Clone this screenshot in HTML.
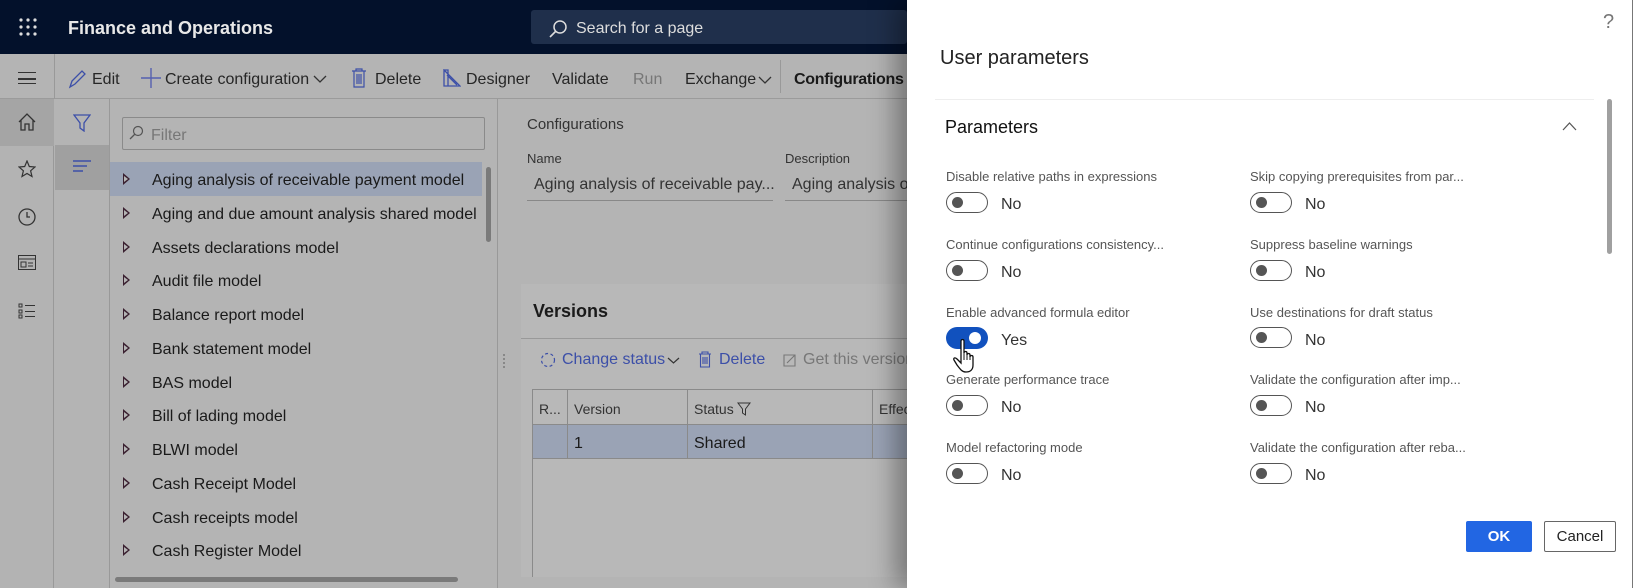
<!DOCTYPE html>
<html><head><meta charset="utf-8"><style>
*{box-sizing:border-box;margin:0;padding:0}
body{width:1638px;height:588px;overflow:hidden;position:relative;background:#b4b4b4;font-family:"Liberation Sans",sans-serif;color:#1f1f1f}
.a{position:absolute;white-space:nowrap}
.top{left:0;top:0;width:907px;height:54px;background:#03112b}
.tb{left:0;top:54px;width:907px;height:45px;background:#b4b4b4;border-bottom:1px solid #9b9b9b}
.nav{left:0;top:99px;width:54px;height:489px;background:#b3b3b3;border-right:1px solid #999}
.col2{left:54px;top:99px;width:56px;height:489px;border-right:1px solid #999}
.row{left:122px;font-size:16px;color:#1a1a1a}
.tri{left:123px;width:0;height:0;border-left:7px solid #3a2030;border-top:6px solid transparent;border-bottom:6px solid transparent}
.tri:after{content:"";position:absolute;left:-6px;top:-3px;border-left:4px solid #b4b4b4;border-top:3px solid transparent;border-bottom:3px solid transparent}
.tbt{top:71px;font-size:16px;color:#262626}
.dlg{left:907px;top:0;width:731px;height:588px;background:#fff;box-shadow:-12px 0 24px rgba(0,0,0,.35)}
.lbl{font-size:13px;color:#555}
.tg{width:42px;height:21px;border:1px solid #555;border-radius:11px}
.tg:after{content:"";position:absolute;left:5px;top:4px;width:11px;height:11px;border-radius:50%;background:#555}
.no{font-size:16px;color:#333}
</style></head><body>
<div class="a top"></div>
<div class="a" style="left:19px;top:18px;width:18px;height:18px">
<svg width="18" height="18"><g fill="#ddd"><circle cx="2" cy="2" r="1.6"/><circle cx="9" cy="2" r="1.6"/><circle cx="16" cy="2" r="1.6"/><circle cx="2" cy="9" r="1.6"/><circle cx="9" cy="9" r="1.6"/><circle cx="16" cy="9" r="1.6"/><circle cx="2" cy="16" r="1.6"/><circle cx="9" cy="16" r="1.6"/><circle cx="16" cy="16" r="1.6"/></g></svg></div>
<div class="a" style="left:68px;top:18px;font-size:18px;font-weight:bold;color:#e8e8e8">Finance and Operations</div>
<div class="a" style="left:531px;top:10px;width:376px;height:34px;background:#1f2f4b;border-radius:3px"></div>
<svg class="a" style="left:548px;top:19px" width="20" height="20"><circle cx="12" cy="8" r="6" fill="none" stroke="#ddd" stroke-width="1.5"/><line x1="8" y1="12" x2="2" y2="18" stroke="#ddd" stroke-width="1.6"/></svg>
<div class="a" style="left:576px;top:20px;font-size:16px;color:#ddd">Search for a page</div>
<div class="a tb"></div>
<div class="a" style="left:18px;top:72px;width:18px;height:12px;border-top:1.5px solid #333;border-bottom:1.5px solid #333"></div>
<div class="a" style="left:18px;top:78px;width:18px;height:1.5px;background:#333"></div>
<div class="a" style="left:54px;top:54px;width:1px;height:45px;background:#999"></div>
<svg class="a" style="left:68px;top:69px" width="18" height="20"><path d="M2 18 L4 12 L14 2 L17 5 L7 15 Z" fill="none" stroke="#3c4fa8" stroke-width="1.3"/></svg>
<div class="a tbt" style="left:92px">Edit</div>
<svg class="a" style="left:141px;top:68px" width="20" height="20"><path d="M10 0V20M0 10H20" stroke="#5560b0" stroke-width="1.4"/></svg>
<div class="a tbt" style="left:165px">Create configuration</div>
<svg class="a" style="left:313px;top:75px" width="14" height="9"><path d="M1 1L7 7L13 1" fill="none" stroke="#333" stroke-width="1.3"/></svg>
<svg class="a" style="left:351px;top:68px" width="16" height="20"><path d="M1 3H15M5 3V1H11V3M3 3V19H13V3M6 6V16M8 6V16M10 6V16" fill="none" stroke="#3c4fa8" stroke-width="1.2"/></svg>
<div class="a tbt" style="left:375px">Delete</div>
<svg class="a" style="left:443px;top:69px" width="18" height="18"><path d="M1 1V17H17Z M1 1H5V17 M4 6L14 16" fill="none" stroke="#3c4fa8" stroke-width="1.3"/></svg>
<div class="a tbt" style="left:466px">Designer</div>
<div class="a tbt" style="left:552px">Validate</div>
<div class="a tbt" style="left:633px;color:#777">Run</div>
<div class="a tbt" style="left:685px">Exchange</div>
<svg class="a" style="left:758px;top:76px" width="14" height="9"><path d="M1 1L7 7L13 1" fill="none" stroke="#333" stroke-width="1.3"/></svg>
<div class="a" style="left:780px;top:60px;width:1px;height:33px;background:#999"></div>
<div class="a tbt" style="left:794px;font-weight:bold;color:#1a1a1a;letter-spacing:-0.3px">Configurations</div>
<div class="a nav"></div>
<div class="a" style="left:0;top:99px;width:54px;height:47px;background:#a5a5a5"></div>
<svg class="a" style="left:18px;top:113px" width="18" height="18"><path d="M1 9L9 1L17 9M3 7V17H7V11H11V17H15V7" fill="none" stroke="#333" stroke-width="1.3"/></svg>
<svg class="a" style="left:18px;top:160px" width="18" height="18"><path d="M9 1L11.3 6.5L17 7L12.6 10.8L14 16.5L9 13.5L4 16.5L5.4 10.8L1 7L6.7 6.5Z" fill="none" stroke="#333" stroke-width="1.2"/></svg>
<svg class="a" style="left:18px;top:208px" width="18" height="18"><circle cx="9" cy="9" r="8" fill="none" stroke="#333" stroke-width="1.3"/><path d="M9 4V9H12" fill="none" stroke="#333" stroke-width="1.3"/></svg>
<svg class="a" style="left:18px;top:255px" width="18" height="16"><rect x="0.5" y="0.5" width="17" height="14" fill="none" stroke="#333"/><path d="M1 4H17M3 7H8V12H3Z M10 8H15M10 11H15" fill="none" stroke="#333"/></svg>
<svg class="a" style="left:18px;top:303px" width="18" height="16"><path d="M1 1H4V4H1Z M1 7H4V10H1Z M1 12H4V15H1Z M7 2.5H17 M7 8.5H17 M7 13.5H17" fill="none" stroke="#333"/></svg>
<div class="a col2"></div>
<div class="a" style="left:55px;top:145px;width:54px;height:45px;background:#a0a0a0"></div>
<svg class="a" style="left:73px;top:114px" width="18" height="18"><path d="M1 1H17L11 9V17L7 14V9Z" fill="none" stroke="#3c4fa8" stroke-width="1.3"/></svg>
<svg class="a" style="left:73px;top:160px" width="18" height="14"><path d="M0 1H18M0 6H14M0 11H10" stroke="#3c4fa8" stroke-width="1.4"/></svg>
<div class="a" style="left:122px;top:117px;width:363px;height:33px;border:1px solid #8a8a8a;border-radius:2px"></div>
<svg class="a" style="left:128px;top:125px" width="16" height="16"><circle cx="10" cy="6" r="4.5" fill="none" stroke="#555" stroke-width="1.2"/><line x1="7" y1="9" x2="2" y2="14" stroke="#555" stroke-width="1.3"/></svg>
<div class="a" style="left:151px;top:127px;font-size:16px;color:#777">Filter</div>
<div class="a" style="left:110px;top:162px;width:372px;height:34px;background:#9aa3b5"></div>
<div class="a" style="left:486px;top:167px;width:5px;height:75px;background:#7a7a7a;border-radius:3px"></div>
<div class="a" style="left:115px;top:577px;width:343px;height:5px;background:#7a7a7a;border-radius:3px"></div>
<div class="a tri" style="top:173px"></div><div class="a row" style="left:152px;top:172px">Aging analysis of receivable payment model</div>
<div class="a tri" style="top:207px"></div><div class="a row" style="left:152px;top:206px">Aging and due amount analysis shared model</div>
<div class="a tri" style="top:241px"></div><div class="a row" style="left:152px;top:240px">Assets declarations model</div>
<div class="a tri" style="top:274px"></div><div class="a row" style="left:152px;top:273px">Audit file model</div>
<div class="a tri" style="top:308px"></div><div class="a row" style="left:152px;top:307px">Balance report model</div>
<div class="a tri" style="top:342px"></div><div class="a row" style="left:152px;top:341px">Bank statement model</div>
<div class="a tri" style="top:376px"></div><div class="a row" style="left:152px;top:375px">BAS model</div>
<div class="a tri" style="top:409px"></div><div class="a row" style="left:152px;top:408px">Bill of lading model</div>
<div class="a tri" style="top:443px"></div><div class="a row" style="left:152px;top:442px">BLWI model</div>
<div class="a tri" style="top:477px"></div><div class="a row" style="left:152px;top:476px">Cash Receipt Model</div>
<div class="a tri" style="top:511px"></div><div class="a row" style="left:152px;top:510px">Cash receipts model</div>
<div class="a tri" style="top:544px"></div><div class="a row" style="left:152px;top:543px">Cash Register Model</div>
<div class="a" style="left:497px;top:99px;width:1px;height:489px;background:#999"></div>
<div class="a" style="left:503px;top:354px;width:2px;height:14px;border-left:2px dotted #888"></div>
<div class="a" style="left:527px;top:116px;font-size:15px;color:#333">Configurations</div>
<div class="a" style="left:527px;top:151px;font-size:13px;color:#333">Name</div>
<div class="a" style="left:785px;top:151px;font-size:13px;color:#333">Description</div>
<div class="a" style="left:534px;top:176px;font-size:16px;color:#333">Aging analysis of receivable pay...</div>
<div class="a" style="left:792px;top:176px;font-size:16px;color:#333">Aging analysis of</div>
<div class="a" style="left:527px;top:200px;width:246px;height:1px;background:#888"></div>
<div class="a" style="left:785px;top:200px;width:122px;height:1px;background:#888"></div>
<div class="a" style="left:521px;top:284px;width:386px;height:293px;background:#b8b8b8"></div>
<div class="a" style="left:533px;top:301px;font-size:18px;font-weight:bold;color:#1a1a1a">Versions</div>
<div class="a" style="left:521px;top:338px;width:386px;height:1px;background:#999"></div>
<svg class="a" style="left:540px;top:352px" width="16" height="16"><circle cx="8" cy="8" r="6.5" fill="none" stroke="#3c4fa8" stroke-width="1.2" stroke-dasharray="3 2.5"/></svg>
<div class="a" style="left:562px;top:351px;font-size:16px;color:#3c4fa8">Change status</div>
<svg class="a" style="left:667px;top:357px" width="13" height="8"><path d="M1 1L6.5 6L12 1" fill="none" stroke="#333" stroke-width="1.2"/></svg>
<svg class="a" style="left:698px;top:351px" width="14" height="17"><path d="M1 3H13M4 3V1H10V3M2.5 3V16H11.5V3M5 6V13M7 6V13M9 6V13" fill="none" stroke="#3c4fa8" stroke-width="1.1"/></svg>
<div class="a" style="left:719px;top:351px;font-size:16px;color:#3c4fa8">Delete</div>
<svg class="a" style="left:783px;top:353px" width="14" height="14"><path d="M1 2H12V13H1Z M4 10L12 2" fill="none" stroke="#777" stroke-width="1.1"/></svg>
<div class="a" style="left:803px;top:351px;font-size:16px;color:#777">Get this version</div>
<div class="a" style="left:532px;top:389px;width:380px;height:188px;border:1px solid #8a8a8a;border-bottom:none"></div>
<div class="a" style="left:533px;top:424px;width:374px;height:35px;background:#9aa3b5;border-top:1px solid #8a8a8a;border-bottom:1px solid #8a8a8a"></div>
<div class="a" style="left:567px;top:389px;width:1px;height:70px;background:#8a8a8a"></div>
<div class="a" style="left:687px;top:389px;width:1px;height:70px;background:#8a8a8a"></div>
<div class="a" style="left:872px;top:389px;width:1px;height:70px;background:#8a8a8a"></div>
<div class="a" style="left:539px;top:401px;font-size:14px;color:#333">R...</div>
<div class="a" style="left:574px;top:401px;font-size:14px;color:#333">Version</div>
<div class="a" style="left:694px;top:401px;font-size:14px;color:#333">Status</div>
<svg class="a" style="left:737px;top:402px" width="14" height="14"><path d="M1 1H13L8.5 7V13L5.5 11V7Z" fill="none" stroke="#333"/></svg>
<div class="a" style="left:879px;top:401px;font-size:14px;color:#333">Effec</div>
<div class="a" style="left:574px;top:435px;font-size:16px;color:#1a1a1a">1</div>
<div class="a" style="left:694px;top:435px;font-size:16px;color:#1a1a1a">Shared</div>

<div class="a dlg"></div>
<div class="a" style="left:1603px;top:11px;font-size:20px;color:#777">?</div>
<div class="a" style="left:1632px;top:0;width:1px;height:588px;background:#777"></div>
<div class="a" style="left:940px;top:47px;font-size:20px;color:#222">User parameters</div>
<div class="a" style="left:935px;top:99px;width:659px;height:1px;background:#eee"></div>
<div class="a" style="left:1607px;top:99px;width:5px;height:155px;background:#a0a0a0;border-radius:3px"></div>
<div class="a" style="left:945px;top:117px;font-size:18px;color:#111">Parameters</div>
<svg class="a" style="left:1562px;top:122px" width="15" height="9"><path d="M1 8L7.5 1L14 8" fill="none" stroke="#555" stroke-width="1.2"/></svg>

<div class="a lbl" style="left:946px;top:169px">Disable relative paths in expressions</div>
<div class="a tg" style="left:946px;top:192px"></div><div class="a no" style="left:1001px;top:196px">No</div>
<div class="a lbl" style="left:946px;top:237px">Continue configurations consistency...</div>
<div class="a tg" style="left:946px;top:260px"></div><div class="a no" style="left:1001px;top:264px">No</div>
<div class="a lbl" style="left:946px;top:305px">Enable advanced formula editor</div>
<div class="a" style="left:946px;top:327px;width:42px;height:22px;border-radius:11px;background:#1151be"></div>
<div class="a" style="left:969px;top:332px;width:12px;height:12px;border-radius:50%;background:#fff"></div>
<div class="a no" style="left:1001px;top:332px">Yes</div>
<svg class="a" style="left:953px;top:338px" width="28" height="36"><path d="M8 3C8 1 11 1 11 3V15C11 13 14 13 14 15V17C14 15 17 15 17 17V19C17 17 20 17 20 19V27C20 32 17 34 13 34C9 34 7 31 4 27L1 22C0 20 2 19 4 21L8 25Z" fill="#fff" stroke="#111" stroke-width="1.3"/><path d="M11 15V22M14 17V22M17 19V22" stroke="#111" stroke-width="1"/></svg>
<div class="a lbl" style="left:946px;top:372px">Generate performance trace</div>
<div class="a tg" style="left:946px;top:395px"></div><div class="a no" style="left:1001px;top:399px">No</div>
<div class="a lbl" style="left:946px;top:440px">Model refactoring mode</div>
<div class="a tg" style="left:946px;top:463px"></div><div class="a no" style="left:1001px;top:467px">No</div>

<div class="a lbl" style="left:1250px;top:169px">Skip copying prerequisites from par...</div>
<div class="a tg" style="left:1250px;top:192px"></div><div class="a no" style="left:1305px;top:196px">No</div>
<div class="a lbl" style="left:1250px;top:237px">Suppress baseline warnings</div>
<div class="a tg" style="left:1250px;top:260px"></div><div class="a no" style="left:1305px;top:264px">No</div>
<div class="a lbl" style="left:1250px;top:305px">Use destinations for draft status</div>
<div class="a tg" style="left:1250px;top:327px"></div><div class="a no" style="left:1305px;top:332px">No</div>
<div class="a lbl" style="left:1250px;top:372px">Validate the configuration after imp...</div>
<div class="a tg" style="left:1250px;top:395px"></div><div class="a no" style="left:1305px;top:399px">No</div>
<div class="a lbl" style="left:1250px;top:440px">Validate the configuration after reba...</div>
<div class="a tg" style="left:1250px;top:463px"></div><div class="a no" style="left:1305px;top:467px">No</div>

<div class="a" style="left:1466px;top:521px;width:66px;height:31px;background:#2266e3;border-radius:2px;color:#fff;font-size:15px;font-weight:bold;text-align:center;line-height:31px">OK</div>
<div class="a" style="left:1544px;top:521px;width:72px;height:31px;border:1px solid #666;border-radius:2px;color:#222;font-size:15px;text-align:center;line-height:29px">Cancel</div>
</body></html>
